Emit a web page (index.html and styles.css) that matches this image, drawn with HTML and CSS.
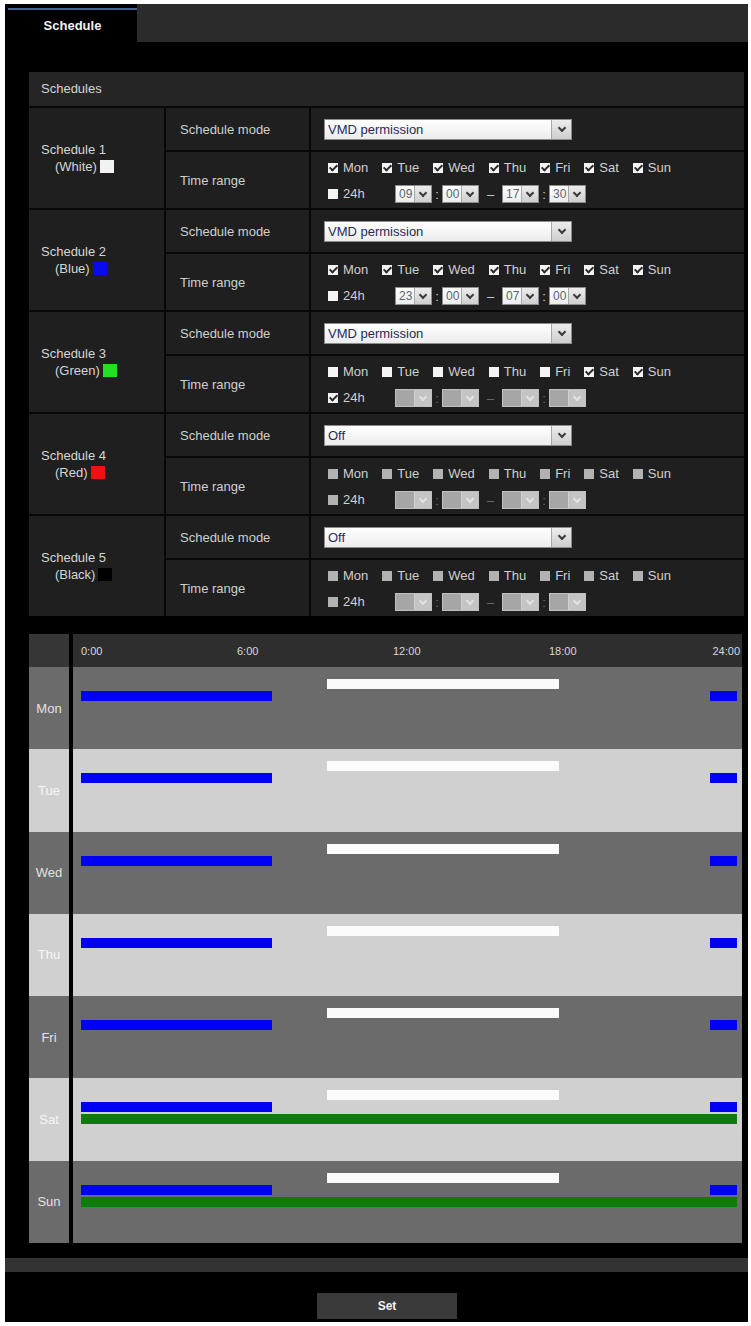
FILE: index.html
```html
<!DOCTYPE html>
<html>
<head>
    <title>Schedule</title>
    <link rel="stylesheet" href="styles.css">
</head>
<body>
<div id="page">
    <div id="tabs">
        <div class="tab"><div class="tab-label">Schedule</div></div>
    </div>

    <div id="content">
        <div class="section-title">Schedules</div>

        <div id="schedules">
            <!-- Schedule 1 -->
            <div class="sched-name">Schedule 1<span class="sched-color">(White)<i class="swatch white"></i></span></div>
            <div class="field-name">Schedule mode</div>
            <div class="field">
                <div class="select wide"><span class="value">VMD permission</span><span class="arrow"></span></div>
            </div>
            <div class="field-name">Time range</div>
            <div class="field time">
                <div class="days">
                    <label><span class="cb on"></span>Mon</label>
                    <label><span class="cb on"></span>Tue</label>
                    <label><span class="cb on"></span>Wed</label>
                    <label><span class="cb on"></span>Thu</label>
                    <label><span class="cb on"></span>Fri</label>
                    <label><span class="cb on"></span>Sat</label>
                    <label><span class="cb on"></span>Sun</label>
                </div>
                <div class="hours">
                    <label class="all-day"><span class="cb"></span>24h</label>
                    <div class="select small"><span class="value">09</span><span class="arrow"></span></div>
                    <span class="colon">:</span>
                    <div class="select small"><span class="value">00</span><span class="arrow"></span></div>
                    <span class="dash">&ndash;</span>
                    <div class="select small"><span class="value">17</span><span class="arrow"></span></div>
                    <span class="colon">:</span>
                    <div class="select small"><span class="value">30</span><span class="arrow"></span></div>
                </div>
            </div>

            <!-- Schedule 2 -->
            <div class="sched-name">Schedule 2<span class="sched-color">(Blue)<i class="swatch blue"></i></span></div>
            <div class="field-name">Schedule mode</div>
            <div class="field">
                <div class="select wide"><span class="value">VMD permission</span><span class="arrow"></span></div>
            </div>
            <div class="field-name">Time range</div>
            <div class="field time">
                <div class="days">
                    <label><span class="cb on"></span>Mon</label>
                    <label><span class="cb on"></span>Tue</label>
                    <label><span class="cb on"></span>Wed</label>
                    <label><span class="cb on"></span>Thu</label>
                    <label><span class="cb on"></span>Fri</label>
                    <label><span class="cb on"></span>Sat</label>
                    <label><span class="cb on"></span>Sun</label>
                </div>
                <div class="hours">
                    <label class="all-day"><span class="cb"></span>24h</label>
                    <div class="select small"><span class="value">23</span><span class="arrow"></span></div>
                    <span class="colon">:</span>
                    <div class="select small"><span class="value">00</span><span class="arrow"></span></div>
                    <span class="dash">&ndash;</span>
                    <div class="select small"><span class="value">07</span><span class="arrow"></span></div>
                    <span class="colon">:</span>
                    <div class="select small"><span class="value">00</span><span class="arrow"></span></div>
                </div>
            </div>

            <!-- Schedule 3 -->
            <div class="sched-name">Schedule 3<span class="sched-color">(Green)<i class="swatch green"></i></span></div>
            <div class="field-name">Schedule mode</div>
            <div class="field">
                <div class="select wide"><span class="value">VMD permission</span><span class="arrow"></span></div>
            </div>
            <div class="field-name">Time range</div>
            <div class="field time">
                <div class="days">
                    <label><span class="cb"></span>Mon</label>
                    <label><span class="cb"></span>Tue</label>
                    <label><span class="cb"></span>Wed</label>
                    <label><span class="cb"></span>Thu</label>
                    <label><span class="cb"></span>Fri</label>
                    <label><span class="cb on"></span>Sat</label>
                    <label><span class="cb on"></span>Sun</label>
                </div>
                <div class="hours disabled">
                    <label class="all-day"><span class="cb on"></span>24h</label>
                    <div class="select small off"><span class="value"></span><span class="arrow"></span></div>
                    <span class="colon">:</span>
                    <div class="select small off"><span class="value"></span><span class="arrow"></span></div>
                    <span class="dash">&ndash;</span>
                    <div class="select small off"><span class="value"></span><span class="arrow"></span></div>
                    <span class="colon">:</span>
                    <div class="select small off"><span class="value"></span><span class="arrow"></span></div>
                </div>
            </div>

            <!-- Schedule 4 -->
            <div class="sched-name">Schedule 4<span class="sched-color">(Red)<i class="swatch red"></i></span></div>
            <div class="field-name">Schedule mode</div>
            <div class="field">
                <div class="select wide"><span class="value">Off</span><span class="arrow"></span></div>
            </div>
            <div class="field-name">Time range</div>
            <div class="field time">
                <div class="days">
                    <label><span class="cb off"></span>Mon</label>
                    <label><span class="cb off"></span>Tue</label>
                    <label><span class="cb off"></span>Wed</label>
                    <label><span class="cb off"></span>Thu</label>
                    <label><span class="cb off"></span>Fri</label>
                    <label><span class="cb off"></span>Sat</label>
                    <label><span class="cb off"></span>Sun</label>
                </div>
                <div class="hours disabled">
                    <label class="all-day"><span class="cb off"></span>24h</label>
                    <div class="select small off"><span class="value"></span><span class="arrow"></span></div>
                    <span class="colon">:</span>
                    <div class="select small off"><span class="value"></span><span class="arrow"></span></div>
                    <span class="dash">&ndash;</span>
                    <div class="select small off"><span class="value"></span><span class="arrow"></span></div>
                    <span class="colon">:</span>
                    <div class="select small off"><span class="value"></span><span class="arrow"></span></div>
                </div>
            </div>

            <!-- Schedule 5 -->
            <div class="sched-name">Schedule 5<span class="sched-color">(Black)<i class="swatch black"></i></span></div>
            <div class="field-name">Schedule mode</div>
            <div class="field">
                <div class="select wide"><span class="value">Off</span><span class="arrow"></span></div>
            </div>
            <div class="field-name">Time range</div>
            <div class="field time">
                <div class="days">
                    <label><span class="cb off"></span>Mon</label>
                    <label><span class="cb off"></span>Tue</label>
                    <label><span class="cb off"></span>Wed</label>
                    <label><span class="cb off"></span>Thu</label>
                    <label><span class="cb off"></span>Fri</label>
                    <label><span class="cb off"></span>Sat</label>
                    <label><span class="cb off"></span>Sun</label>
                </div>
                <div class="hours disabled">
                    <label class="all-day"><span class="cb off"></span>24h</label>
                    <div class="select small off"><span class="value"></span><span class="arrow"></span></div>
                    <span class="colon">:</span>
                    <div class="select small off"><span class="value"></span><span class="arrow"></span></div>
                    <span class="dash">&ndash;</span>
                    <div class="select small off"><span class="value"></span><span class="arrow"></span></div>
                    <span class="colon">:</span>
                    <div class="select small off"><span class="value"></span><span class="arrow"></span></div>
                </div>
            </div>
        </div>

        <!-- Weekly overview: lane 1 = schedule 1 (white), lane 2 = schedule 2 (blue), lane 3 = schedule 3 (green) -->
        <div id="chart">
            <div class="corner"></div>
            <div class="scale"><span>0:00</span><span>6:00</span><span>12:00</span><span>18:00</span><span class="end">24:00</span></div>

            <div class="day dark">Mon</div>
            <div class="track dark"><div class="lane">
                <i class="bar s1" style="left:37.5%;width:35.42%"></i>
                <i class="bar s2" style="left:0;width:29.17%"></i>
                <i class="bar s2" style="left:95.83%;width:4.17%"></i>
            </div></div>

            <div class="day light">Tue</div>
            <div class="track light"><div class="lane">
                <i class="bar s1" style="left:37.5%;width:35.42%"></i>
                <i class="bar s2" style="left:0;width:29.17%"></i>
                <i class="bar s2" style="left:95.83%;width:4.17%"></i>
            </div></div>

            <div class="day dark">Wed</div>
            <div class="track dark"><div class="lane">
                <i class="bar s1" style="left:37.5%;width:35.42%"></i>
                <i class="bar s2" style="left:0;width:29.17%"></i>
                <i class="bar s2" style="left:95.83%;width:4.17%"></i>
            </div></div>

            <div class="day light">Thu</div>
            <div class="track light"><div class="lane">
                <i class="bar s1" style="left:37.5%;width:35.42%"></i>
                <i class="bar s2" style="left:0;width:29.17%"></i>
                <i class="bar s2" style="left:95.83%;width:4.17%"></i>
            </div></div>

            <div class="day dark">Fri</div>
            <div class="track dark"><div class="lane">
                <i class="bar s1" style="left:37.5%;width:35.42%"></i>
                <i class="bar s2" style="left:0;width:29.17%"></i>
                <i class="bar s2" style="left:95.83%;width:4.17%"></i>
            </div></div>

            <div class="day light">Sat</div>
            <div class="track light"><div class="lane">
                <i class="bar s1" style="left:37.5%;width:35.42%"></i>
                <i class="bar s2" style="left:0;width:29.17%"></i>
                <i class="bar s2" style="left:95.83%;width:4.17%"></i>
                <i class="bar s3" style="left:0;width:100%"></i>
            </div></div>

            <div class="day dark">Sun</div>
            <div class="track dark"><div class="lane">
                <i class="bar s1" style="left:37.5%;width:35.42%"></i>
                <i class="bar s2" style="left:0;width:29.17%"></i>
                <i class="bar s2" style="left:95.83%;width:4.17%"></i>
                <i class="bar s3" style="left:0;width:100%"></i>
            </div></div>
        </div>
    </div>

    <div class="strip"></div>

    <div class="actions">
        <button class="set-button">Set</button>
    </div>
</div>
</body>
</html>
```

FILE: styles.css
```css
body {
    margin: 0;
    background-color: #fff;
    font-family: "Liberation Sans", Arial, sans-serif;
    font-size: 13px;
    color: #d0d0d0;
}
#page {
    width: 743px;
    margin: 4px 0 0 5px;
    background-color: #000;
}

/* tab strip */
#tabs {
    display: flex;
    height: 38px;
    background-color: #2b2b2b;
}
.tab {
    width: 132px;
    padding: 4px 0 0 3px;
    box-sizing: border-box;
    background-color: #000;
}
.tab-label {
    border-top: 2px solid #41688c;
    height: 32px;
    line-height: 32px;
    text-align: center;
    font-weight: bold;
    color: #f2f2f2;
}

#content {
    padding: 30px 4px 0 24px;
}
.section-title {
    height: 34px;
    line-height: 34px;
    padding-left: 12px;
    background-color: #252525;
    color: #d4d4d4;
}

/* settings table */
#schedules {
    display: grid;
    grid-template-columns: 135px 143px 1fr;
    grid-template-rows: repeat(5, 42px 56px);
    gap: 2px;
    padding-top: 2px;
    background-color: #080808;
}
#schedules > div {
    background-color: #1f1f1f;
}
.sched-name {
    grid-row: span 2;
    display: flex;
    flex-direction: column;
    justify-content: center;
    padding-left: 12px;
    line-height: 17px;
    color: #d6d6d6;
}
.sched-color {
    display: flex;
    align-items: center;
    padding-left: 14px;
}
.swatch {
    display: inline-block;
    width: 14px;
    height: 13px;
    margin-left: 3px;
}
.swatch.white { background-color: #f2f2f2; }
.swatch.blue { background-color: #0a0aee; }
.swatch.green { background-color: #22e022; }
.swatch.red { background-color: #ee1212; }
.swatch.black { background-color: #000; }

.field-name {
    display: flex;
    align-items: center;
    padding-left: 14px;
    color: #cfcfcf;
}
.field {
    display: flex;
    align-items: center;
    padding-left: 13px;
}
.field.time {
    flex-direction: column;
    align-items: flex-start;
    justify-content: center;
    gap: 9px;
    padding-top: 3px;
    box-sizing: border-box;
}
.days, .hours {
    display: flex;
    align-items: center;
    margin-left: 4px;
}
.days label, .hours label {
    display: flex;
    align-items: center;
    gap: 5px;
    line-height: 16px;
}
.days label {
    margin-right: 14px;
}
.all-day {
    width: 67px;
}

/* checkboxes */
.cb {
    position: relative;
    width: 10px;
    height: 10px;
    background-color: #f4f4f4;
}
.cb.on::after {
    content: "";
    position: absolute;
    left: 3px;
    top: 0;
    width: 3px;
    height: 6px;
    border: solid #2a2a2a;
    border-width: 0 2px 2px 0;
    transform: rotate(45deg);
}
.cb.off {
    background-color: #b2b2b2;
}

/* drop-down lists */
.select {
    display: flex;
    box-sizing: border-box;
    border: 1px solid #8c8c8c;
    background: linear-gradient(#ffffff, #ececec);
}
.select .value {
    flex: 1;
    padding-left: 3px;
    overflow: hidden;
    white-space: nowrap;
}
.select .arrow {
    position: relative;
    border-left: 1px solid #a8a8a8;
    background: linear-gradient(#ececec, #cfcfcf);
}
.select .arrow::after {
    content: "";
    position: absolute;
    left: 50%;
    top: 50%;
    width: 4px;
    height: 4px;
    margin: -4px 0 0 -3px;
    border: solid #3c3c3c;
    border-width: 0 2px 2px 0;
    transform: rotate(45deg);
}
.select.wide {
    width: 248px;
    height: 21px;
}
.select.wide .value {
    line-height: 19px;
    color: #1f2c58;
}
.select.wide .arrow {
    width: 19px;
}
.select.small {
    width: 37px;
    height: 18px;
}
.select.small .value {
    font-size: 12px;
    line-height: 16px;
    color: #5a6478;
}
.select.small .arrow {
    width: 16px;
}
.select.off {
    border-color: #c0c0c0;
    background: #a6a6a6;
}
.select.off .arrow {
    border-left-color: #d0d0d0;
    background: #c4c4c4;
}
.select.off .arrow::after {
    border-color: #e2e2e2;
}
.colon {
    width: 10px;
    text-align: center;
}
.dash {
    width: 23px;
    text-align: center;
}
.hours.disabled .colon, .hours.disabled .dash {
    color: #6a6a6a;
}

/* weekly chart */
#chart {
    display: grid;
    grid-template-columns: 40px 1fr;
    grid-template-rows: 33px repeat(7, 1fr);
    column-gap: 4px;
    height: 609px;
    margin: 18px 2px 0 0;
    background-color: #000;
}
.corner {
    background-color: #363636;
}
.scale {
    display: grid;
    grid-template-columns: repeat(4, 156px) 1fr;
    align-items: center;
    padding: 0 2px 0 8px;
    background-color: #2e2e2e;
    font-size: 11px;
    color: #d8d8d8;
}
.scale .end {
    text-align: right;
}
.day {
    display: flex;
    align-items: center;
    justify-content: center;
    color: #e2e2e2;
}
.day.light {
    color: #f6f6f6;
}
.dark {
    background-color: #6b6b6b;
}
.light {
    background-color: #d0d0d0;
}
.track {
    padding: 0 5px 0 8px;
}
.lane {
    position: relative;
    height: 100%;
}
.bar {
    position: absolute;
    height: 10px;
}
.bar.s1 { top: 12px; background-color: #fbfbfb; }
.bar.s2 { top: 24px; background-color: #0000f2; }
.bar.s3 { top: 36px; background-color: #0b7d0b; }

/* footer */
.strip {
    height: 14px;
    margin-top: 15px;
    background-color: #333;
}
.actions {
    padding: 21px 0 3px 312px;
}
.set-button {
    display: block;
    width: 140px;
    height: 26px;
    border: none;
    background-color: #3a3a3a;
    color: #f2f2f2;
    font-family: "Liberation Sans", Arial, sans-serif;
    font-size: 12px;
    font-weight: bold;
    cursor: pointer;
}
```
